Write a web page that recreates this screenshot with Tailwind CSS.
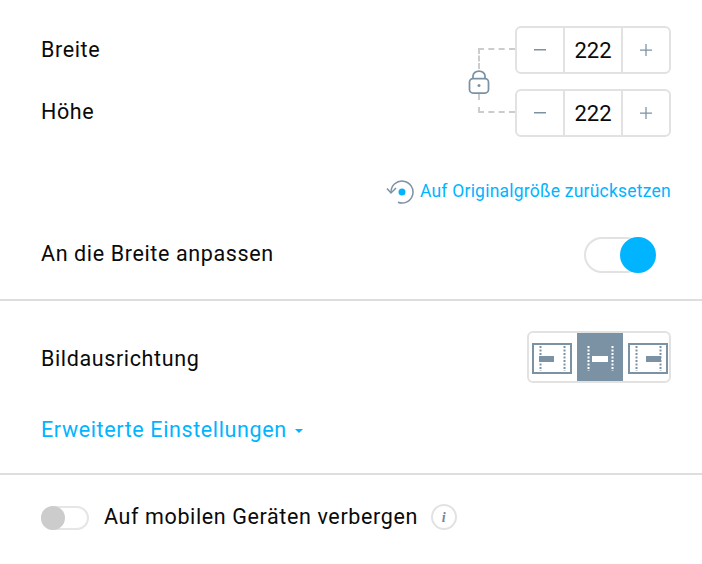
<!DOCTYPE html>
<html lang="de">
<head>
<meta charset="utf-8">
<script src="https://cdn.jsdelivr.net/npm/@tailwindcss/browser@4"></script>
</head>
<body class="bg-white font-['Roboto',sans-serif] text-[21.5px] tracking-[0.62px] text-[#0a0a0a]">
<div class="w-[702px] h-[564px] overflow-hidden">
  <section class="h-[301px] border-b-2 border-[#dedede] pl-[41px] pr-[31px] pt-[26px]">
    <div class="flex justify-between">
      <div class="flex flex-col">
        <div class="h-[48px] leading-[48px]">Breite</div>
        <div class="h-[48px] mt-[15px] leading-[46px]">Höhe</div>
      </div>
      <div class="flex">
        <div class="w-[37px] pt-[22px]">
          <div class="relative w-[37px] h-[91px]">
            <div class="h-[21px] w-[37px] border-l-2 border-t-2 border-dashed border-[#cccccc]"></div>
            <svg class="absolute left-[-10px] top-[22px]" width="22" height="24" viewBox="0 0 22 24" fill="none" stroke="#7b92a5" stroke-width="1.750"><rect x="1.500" y="8.500" width="19" height="14.500" rx="3.500"/><path d="M5 8.500V6a6 5 0 0 1 12 0v2.500"/><circle cx="11" cy="15.500" r="1.500" fill="#7b92a5" stroke="none"/></svg>
            <div class="absolute left-0 top-[46px] h-[19px] w-[37px] border-l-2 border-b-2 border-dashed border-[#cccccc]"></div>
          </div>
        </div>
        <div class="flex flex-col gap-[15px]">
          <div class="flex w-[156px] h-[48px] border-2 border-[#e2e2e2] rounded-[6px]">
            <div class="w-[48px] flex items-center justify-center border-r-2 border-[#e2e2e2]"><svg width="12" height="2"><rect width="12" height="1.500" fill="#7b92a5"/></svg></div>
            <div class="w-[58px] flex items-center justify-center border-r-2 border-[#e2e2e2] text-[#0a0a0a] text-[22px] tracking-normal">222</div>
            <div class="flex-1 flex items-center justify-center"><svg width="12" height="12"><path d="M0 6h12M6 0v12" stroke="#7b92a5" stroke-width="1.250"/></svg></div>
          </div>
          <div class="flex w-[156px] h-[48px] border-2 border-[#e2e2e2] rounded-[6px]">
            <div class="w-[48px] flex items-center justify-center border-r-2 border-[#e2e2e2]"><svg width="12" height="2"><rect width="12" height="1.500" fill="#7b92a5"/></svg></div>
            <div class="w-[58px] flex items-center justify-center border-r-2 border-[#e2e2e2] text-[#0a0a0a] text-[22px] tracking-normal">222</div>
            <div class="flex-1 flex items-center justify-center"><svg width="12" height="12"><path d="M0 6h12M6 0v12" stroke="#7b92a5" stroke-width="1.250"/></svg></div>
          </div>
        </div>
      </div>
    </div>
    <div class="flex justify-end items-center gap-[6px] mt-[37px] h-[32px] text-[#00b4ff] text-[17.5px] tracking-[0.23px]">
      <svg class="mt-[2px]" width="28" height="26" viewBox="0 0 28 26" fill="none"><path d="M5 12A11 11 0 1 1 12 22.300" stroke="#7b92a5" stroke-width="1.500"/><path d="M1 8.500l4 4.500 5-5" stroke="#7b92a5" stroke-width="1.500"/><circle cx="16" cy="12" r="3.500" fill="#00b4ff"/></svg>
      <span class="pb-[1px]">Auf Originalgröße zurücksetzen</span>
    </div>
    <div class="flex justify-between items-center mt-[29px] h-[36px]">
      <span class="pb-[2px]">An die Breite anpassen</span>
      <div class="relative w-[72px] h-[36px] mr-[15px]">
        <div class="absolute left-0 top-0 w-[60px] h-[36px] rounded-full border-2 border-[#e2e2e2]"></div>
        <div class="absolute right-0 top-0 w-[36px] h-[36px] rounded-full bg-[#00b4ff]"></div>
      </div>
    </div>
  </section>
  <section class="h-[174px] border-b-2 border-[#dedede] pl-[41px] pr-[31px] pt-[30px]">
    <div class="flex justify-between items-center">
      <span class="pt-[4px]">Bildausrichtung</span>
      <div class="flex items-stretch w-[144px] h-[52px] border-2 border-[#e2e2e2] rounded-[6px]">
        <div class="w-[48px] pl-[3px] pt-[10px]"><svg class="block" width="40" height="31" viewBox="0 0 40 31" fill="none"><rect x="1" y="1" width="38" height="29" stroke="#7b92a5" stroke-width="2"/><path d="M8.500 3v25M32.500 3v25" stroke="#7b92a5" stroke-width="2" stroke-dasharray="2 1.500"/><rect x="7" y="13" width="15" height="6" fill="#7b92a5"/></svg></div>
        <div class="w-[46px] pl-[3px] pt-[10px] bg-[#7b92a5]"><svg class="block" width="40" height="31" viewBox="0 0 40 31" fill="none"><path d="M8.500 3v25M32.500 3v25" stroke="#fff" stroke-width="2" stroke-dasharray="2 1.500"/><rect x="12" y="13" width="16" height="6" fill="#fff"/></svg></div>
        <div class="flex-1 pl-[5px] pt-[10px]"><svg class="block" width="40" height="31" viewBox="0 0 40 31" fill="none"><rect x="1" y="1" width="38" height="29" stroke="#7b92a5" stroke-width="2"/><path d="M8.500 3v25M32.500 3v25" stroke="#7b92a5" stroke-width="2" stroke-dasharray="2 1.500"/><rect x="18" y="13" width="15" height="6" fill="#7b92a5"/></svg></div>
      </div>
    </div>
    <div class="flex items-center gap-[8px] mt-[31px] text-[#00b4ff]">
      <span>Erweiterte Einstellungen</span>
      <svg class="mt-[2px]" width="8" height="4"><path d="M0 0h8L4 4z" fill="#00b4ff"/></svg>
    </div>
  </section>
  <section class="flex items-center pl-[41px] pt-[29px]">
    <div class="relative mt-[2px] w-[48px] h-[24px] rounded-full border-2 border-[#e6e6e6]">
      <div class="absolute left-[-2px] top-[-2px] w-[24px] h-[24px] rounded-full bg-[#cccccc]"></div>
    </div>
    <span class="ml-[15px] leading-[26px]">Auf mobilen Geräten verbergen</span>
    <div class="ml-[13px] w-[26px] h-[26px] rounded-full border-2 border-[#e2e2e2] flex items-center justify-center font-['Liberation_Serif',serif] italic font-bold text-[14px] text-[#6f889c]">i</div>
  </section>
</div>
</body>
</html>
